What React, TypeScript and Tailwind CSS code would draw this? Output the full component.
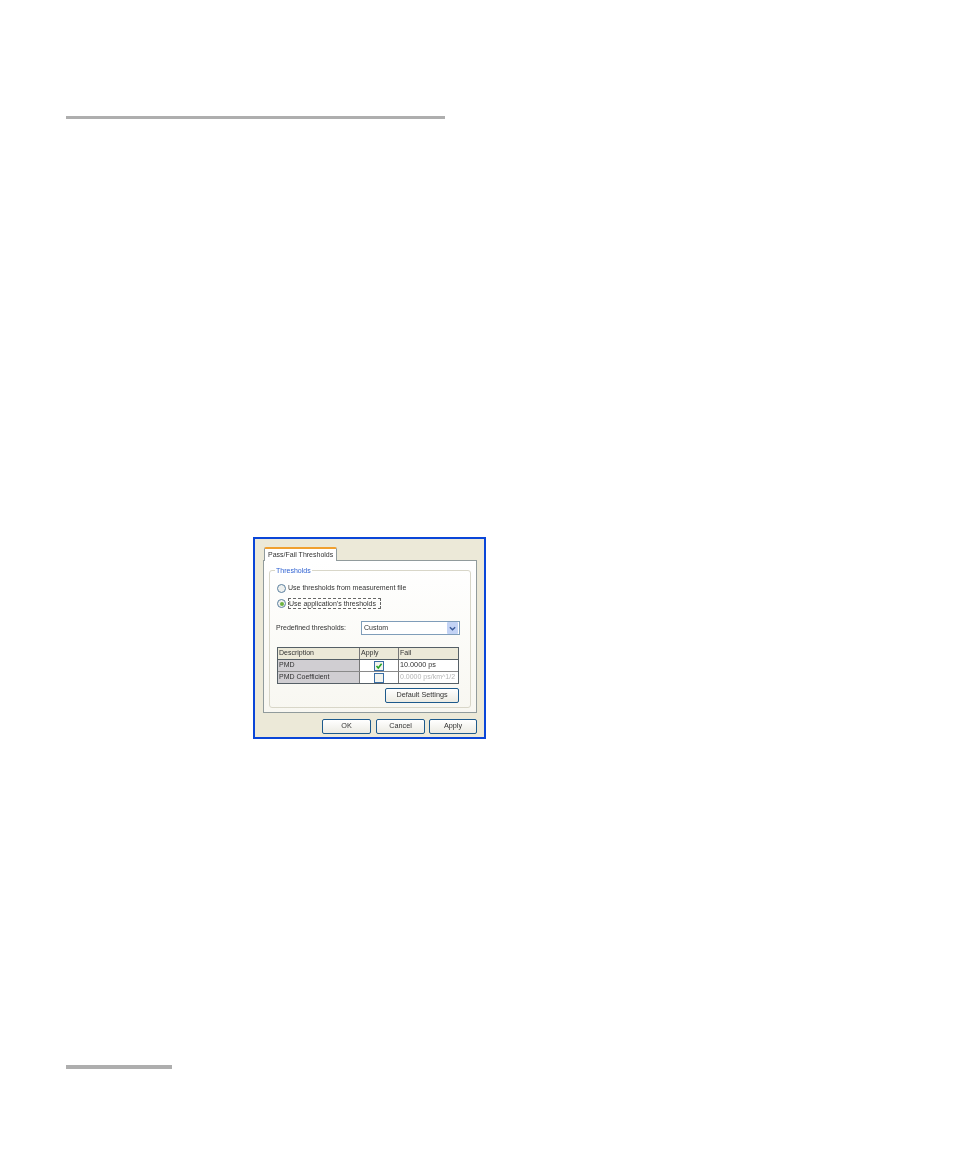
const font = "font-['Liberation_Sans',Arial,sans-serif]";

function XpButton({ label, className }: { label: string; className: string }) {
  return (
    <div
      className={`flex items-center justify-center rounded-[2px] border border-[#1d5a8c] bg-gradient-to-b from-white to-[#ecebe3] text-[7.25px] text-[#333] ${className}`}
    >
      {label}
    </div>
  );
}

function Radio({ checked }: { checked?: boolean }) {
  return (
    <div className="flex h-[9px] w-[9px] shrink-0 items-center justify-center rounded-full border border-[#5a7f9f] bg-[#eef0ee]">
      {checked && <div className="h-[4px] w-[4px] rounded-full bg-[#6cb33f]" />}
    </div>
  );
}

function Checkbox({ checked }: { checked?: boolean }) {
  return (
    <div className="flex h-[10px] w-[10px] items-center justify-center border border-[#3a6ea5] bg-[#f4f4ee]">
      {checked && (
        <svg viewBox="0 0 8 8" className="h-[8px] w-[8px]">
          <path d="M1.5 4 L3.3 6 L6.6 1.8" fill="none" stroke="#21a121" strokeWidth="1.5" />
        </svg>
      )}
    </div>
  );
}

function Dialog() {
  return (
    <div className={`${font} ml-[187px] h-[202px] w-[233px] border-2 border-[#0a46d8] bg-[#ece9d8] px-[8px] pt-[8px] text-[7px] text-[#333] blur-[0.3px]`}>
      <div className="relative z-10 ml-px h-[14px] w-[73px] whitespace-nowrap rounded-t-[2px] border-x border-t-2 border-x-[#919b9c] border-t-[#f0a030] bg-white pl-[3px] pt-px leading-[10px]">
        Pass/Fail Thresholds
      </div>
      <div className="-mt-px h-[153px] w-[214px] border border-[#919b9c] bg-gradient-to-b from-white to-[#f8f7f1] px-[5px] pt-[9px]">
        <div className="relative h-[138px] w-[202px] rounded-[3px] border border-[#d8d6c8] px-[6px]">
          <div className="absolute -top-[5px] left-[5px] bg-white px-px leading-[9px] text-[#2c5fd0]">Thresholds</div>
          <div className="flex items-center gap-[2px] pl-px pt-[12px] leading-[10px]">
            <Radio />
            <span>Use thresholds from measurement file</span>
          </div>
          <div className="mt-[5px] flex items-center gap-[2px] pl-px leading-[10px]">
            <Radio checked />
            <span className="w-[93px] border border-dashed border-[#666] leading-[9px]">Use application's thresholds</span>
          </div>
          <div className="mt-[12px] flex items-center">
            <span className="w-[85px]">Predefined thresholds:</span>
            <div className="flex h-[14px] w-[99px] items-center justify-between border border-[#7f9db9] bg-white pl-[2px] pr-px">
              <span>Custom</span>
              <div className="flex h-[12px] w-[11px] items-center justify-center rounded-[1px] bg-[#c3d3f5]">
                <svg viewBox="0 0 8 8" className="h-[7px] w-[7px]">
                  <path d="M1 2.5 L4 5.5 L7 2.5" fill="none" stroke="#3a5a9a" strokeWidth="1.6" />
                </svg>
              </div>
            </div>
          </div>
          <div className="mt-[12px] ml-[1px] w-[182px] border border-[#555f66] bg-white leading-[10px]">
            <div className="flex h-[12px] border-b border-[#555f66] bg-[#ece9d8]">
              <div className="w-[82px] border-r border-[#777] pl-[1px]">Description</div>
              <div className="w-[39px] border-r border-[#777] pl-[1px]">Apply</div>
              <div className="flex-1 pl-[1px]">Fail</div>
            </div>
            <div className="flex h-[12px] border-b border-[#8a8a8a]">
              <div className="w-[82px] border-r border-[#777] bg-[#d0ced2] pl-[1px]">PMD</div>
              <div className="flex w-[39px] items-center justify-center border-r border-[#777]"><Checkbox checked /></div>
              <div className="flex-1 pl-[1px] text-[7.25px]">10.0000 ps</div>
            </div>
            <div className="flex h-[11px]">
              <div className="w-[82px] border-r border-[#777] bg-[#d0ced2] pl-[1px]">PMD Coefficient</div>
              <div className="flex w-[39px] items-center justify-center border-r border-[#777]"><Checkbox /></div>
              <div className="flex-1 overflow-hidden whitespace-nowrap pl-[1px] text-[#b5b5b5]">0.0000 ps/km^1/2</div>
            </div>
          </div>
          <div className="mt-[4px] flex justify-end pr-[5px]">
            <XpButton label="Default Settings" className="h-[15px] w-[74px]" />
          </div>
        </div>
      </div>
      <div className="mt-[6px] flex w-[214px] justify-end gap-[4px]">
        <XpButton label="OK" className="mr-px h-[15px] w-[49px]" />
        <XpButton label="Cancel" className="h-[15px] w-[49px]" />
        <XpButton label="Apply" className="h-[15px] w-[48px]" />
      </div>
    </div>
  );
}

export default function App() {
  return (
    <div className="h-[1158px] w-[954px] overflow-hidden bg-white pl-[66px] pt-[116px]">
      <div className="h-[3px] w-[379px] bg-[#aeaeae]" />
      <div className="mt-[418px]">
        <Dialog />
      </div>
      <div className="mt-[326px] h-[4px] w-[106px] bg-[#aeaeae]" />
    </div>
  );
}
